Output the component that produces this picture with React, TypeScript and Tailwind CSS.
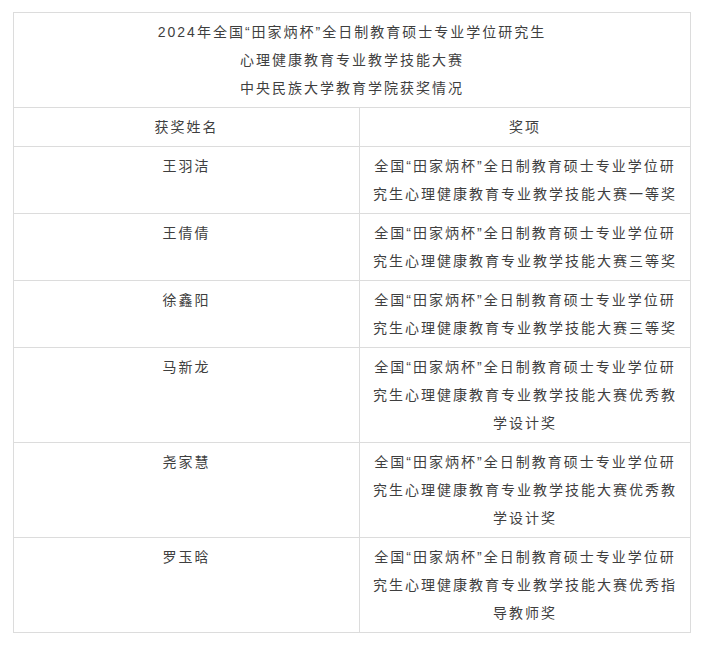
const prize = "全国“田家炳杯”全日制教育硕士专业学位研究生心理健康教育专业教学技能大赛";

const rows: { name: string; award: string }[] = [
  { name: "王羽洁", award: prize + "一等奖" },
  { name: "王倩倩", award: prize + "三等奖" },
  { name: "徐鑫阳", award: prize + "三等奖" },
  { name: "马新龙", award: prize + "优秀教学设计奖" },
  { name: "尧家慧", award: prize + "优秀教学设计奖" },
  { name: "罗玉晗", award: prize + "优秀指导教师奖" },
];

export default function App() {
  return (
    <div
      className="min-h-[647px] bg-white pt-3 pl-[13px] text-[14px] leading-[28px] tracking-[2px] text-[#3f3f3f]"
      style={{ fontFamily: '"Liberation Sans", "Noto Sans CJK SC", sans-serif' }}
    >
      <table className="w-[677px] border-collapse table-fixed">
        <colgroup>
          <col className="w-[346px]" />
          <col className="w-[331px]" />
        </colgroup>
        <tbody>
          <tr>
            <td colSpan={2} className="border border-[#dcdcdc] px-2.5 py-[5px] text-center">
              <p>2024年全国“田家炳杯”全日制教育硕士专业学位研究生</p>
              <p>心理健康教育专业教学技能大赛</p>
              <p>中央民族大学教育学院获奖情况</p>
            </td>
          </tr>
          <tr>
            <td className="border border-[#dcdcdc] px-2.5 py-[5px] text-center">获奖姓名</td>
            <td className="border border-[#dcdcdc] px-2.5 py-[5px] text-center">奖项</td>
          </tr>
          {rows.map((r) => (
            <tr key={r.name}>
              <td className="border border-[#dcdcdc] px-2.5 py-[5px] text-center align-top">{r.name}</td>
              <td className="border border-[#dcdcdc] px-2.5 py-[5px] text-center align-top">{r.award}</td>
            </tr>
          ))}
        </tbody>
      </table>
    </div>
  );
}
